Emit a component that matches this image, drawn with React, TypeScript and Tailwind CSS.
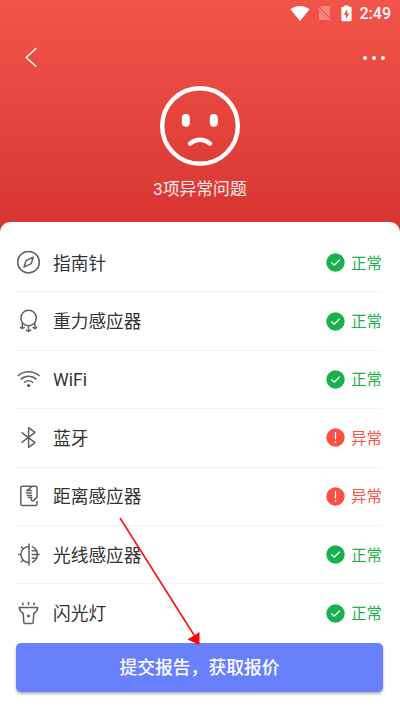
import React from "react";

type Check = {
  id: string;
  name: string;
  ok: boolean;
  icon: React.ReactNode;
};

const CompassIcon = (
  <>
    <circle cx="12.5" cy="12.2" r="10.8" />
    <path d="M17.2 7.2 L15.2 13.7 L8 17.2 L10 10.7 Z" />
  </>
);

const GravityIcon = (
  <>
    <circle cx="12.6" cy="9" r="7.7" />
    <path d="M6.3 14 V19.4 M18.9 14 V19.4 M12.6 16.7 V22.2" />
    <path d="M4 18.2 L6.3 19.6 L8.6 18.2 M16.6 18.2 L18.9 19.6 L21.2 18.2 M10 20.8 L12.6 22.4 L15.2 20.8" />
  </>
);

const WifiIcon = (
  <>
    <path d="M1.6 9 C8 3.2 17.2 3.2 23.6 9" />
    <path d="M4.8 12.4 C9.3 8.3 15.9 8.3 20.4 12.4" />
    <path d="M8 15.7 C10.7 13.1 14.5 13.1 17.2 15.7" />
    <circle cx="12.6" cy="18.5" r="1.6" fill="#555" stroke="none" />
  </>
);

const BluetoothIcon = (
  <path d="M5.6 7.4 L19 17.6 L12.6 22.3 V2.7 L19 7.4 L5.6 17.6" />
);

const DistanceIcon = (
  <>
    <path d="M21 14 V3.6 Q21 2.2 19.6 2.2 H6.2 Q4.8 2.2 4.8 3.6 V20.2 Q4.8 21.6 6.2 21.6 H19.6 Q21 21.6 21 20.2 V17" />
    <path d="M15 3.4 L11 6.6 M15.5 6.6 H10.7 M15.5 9 H10.2 M15.5 11.4 H11.2 M15.5 13.6 H12.4" strokeLinecap="round" />
    <path d="M15.4 13.6 V16 Q16.2 17.6 17.6 16.6 L20.8 13.4" />
  </>
);

const LightIcon = (
  <>
    <path d="M13 1.6 V23.4" />
    <path d="M13 4.4 A8.1 8.1 0 0 0 13 20.6" />
    <path d="M16 4.6 A8.6 8.6 0 0 1 16 20.4" />
    <path d="M15.6 8.7 H21.4 M15.6 12.5 H23.8 M15.6 16.3 H21.4 M2.2 12.5 H5 M5 4.8 L7.4 7.2 M5 20.2 L7.4 17.8" />
  </>
);

const TorchIcon = (
  <>
    <path d="M3.2 6.6 H21.8 C21.3 10.1 20.3 11.2 17.8 12.5 L17.2 21.4 Q17.1 22.4 16.1 22.4 H8.9 Q7.9 22.4 7.8 21.4 L7.2 12.5 C4.7 11.2 3.7 10.1 3.2 6.6 Z" />
    <path d="M6.4 1.6 L7.4 4.3 M12.5 1 V4.1 M18.6 1.6 L17.6 4.3" />
    <circle cx="12.5" cy="15" r="1.4" fill="#555" stroke="none" />
  </>
);

const checks: Check[] = [
  { id: "compass", name: "指南针", ok: true, icon: CompassIcon },
  { id: "gravity", name: "重力感应器", ok: true, icon: GravityIcon },
  { id: "wifi", name: "WiFi", ok: true, icon: WifiIcon },
  { id: "bluetooth", name: "蓝牙", ok: false, icon: BluetoothIcon },
  { id: "distance", name: "距离感应器", ok: false, icon: DistanceIcon },
  { id: "light", name: "光线感应器", ok: true, icon: LightIcon },
  { id: "torch", name: "闪光灯", ok: true, icon: TorchIcon },
];

const StatusBar: React.FC = () => (
  <div className="flex h-[27px] items-center justify-end pr-[9px] text-white">
    <svg className="h-[17px] w-5" viewBox="0 0 20 17">
      <path d="M0.4 4.3 C5.8 -0.2 14.2 -0.2 19.6 4.3 L10 16 Z" fill="#fff" />
    </svg>
    <svg className="ml-[7px] h-[17px] w-[15px]" viewBox="0 0 15 17">
      <path d="M5 1 H13 V15 H2 V4 Z" fill="#fff" opacity="0.3" />
      <path d="M0.5 1.8 L14 15.4" stroke="#ee5148" strokeWidth="2.6" />
      <path d="M0.5 2.4 L13.6 15.6" stroke="#fff" strokeWidth="1.2" opacity="0.4" />
    </svg>
    <svg className="ml-[9px] h-[17px] w-[11px]" viewBox="0 0 11 17">
      <path d="M3.3 0.4 H7.7 V1.8 H9.6 Q10.6 1.8 10.6 2.8 V15.2 Q10.6 16.2 9.6 16.2 H1.4 Q0.4 16.2 0.4 15.2 V2.8 Q0.4 1.8 1.4 1.8 H3.3 Z" fill="#fff" />
      <path d="M6.2 4.3 L2.8 9.8 H5 V14 L8.3 8.4 H6.2 Z" fill="#ee5148" />
    </svg>
    <span className="ml-2 font-['Roboto',sans-serif] text-[16px] leading-4 font-medium">
      2:49
    </span>
  </div>
);

const NavBar: React.FC = () => (
  <div className="flex h-[60px] items-center justify-between pr-[15px] pl-[24px]">
    <svg className="h-5 w-[14px]" viewBox="0 0 14 20" fill="none" stroke="#fff" strokeWidth="1.4">
      <path d="M12.2 1.2 L2.2 10.5 L12.2 19.5" />
    </svg>
    <div className="flex gap-[5px] pt-px">
      <i className="h-1 w-1 rounded-full bg-white" />
      <i className="h-1 w-1 rounded-full bg-white" />
      <i className="h-1 w-1 rounded-full bg-white" />
    </div>
  </div>
);

const SadFace: React.FC = () => (
  <svg className="h-20 w-20" viewBox="0 0 80 80" fill="none" stroke="#fff" strokeLinecap="round">
    <circle cx="40" cy="40" r="37.8" strokeWidth="4.4" />
    <path d="M25.8 32 V36.8 M53.8 32 V36.8" strokeWidth="8" />
    <path d="M30 57.5 Q40 50.2 50 57.5" strokeWidth="4.4" />
  </svg>
);

const StatusIcon: React.FC<{ ok: boolean }> = ({ ok }) => (
  <svg className="h-[19px] w-[19px]" viewBox="0 0 19 19" fill="none" stroke="#fff">
    <circle cx="9.5" cy="9.5" r="9.2" fill={ok ? "#18b14c" : "#fb5044"} stroke="none" />
    {ok ? (
      <path d="M5.3 9.5 L8.2 12.2 L13.8 6.7" strokeWidth="1.3" />
    ) : (
      <path d="M9.5 4 V11.5 M9.5 13.2 V14.7" strokeWidth="1.2" />
    )}
  </svg>
);

const CheckRow: React.FC<{ check: Check }> = ({ check }) => (
  <li className="flex h-[58.4px] items-center border-b border-[#f4f4f4] last:border-transparent">
    <svg
      className="h-[25px] w-[25px]"
      viewBox="0 0 25 25"
      fill="none"
      stroke="#606060"
      strokeWidth="1.5"
      strokeLinejoin="round"
    >
      {check.icon}
    </svg>
    <span className="ml-3 pt-0.5 text-[17.7px] leading-6 text-[#333]">{check.name}</span>
    <div
      className={`mr-px ml-auto flex items-center gap-1.5 text-[15.5px] leading-6 ${
        check.ok ? "text-[#18b14c]" : "text-[#fb5044]"
      }`}
    >
      <StatusIcon ok={check.ok} />
      <span className="pt-0.5">{check.ok ? "正常" : "异常"}</span>
    </div>
  </li>
);

const App: React.FC = () => {
  return (
    <div className="relative h-[710px] w-[400px] overflow-hidden bg-white font-['Roboto','Noto_Sans_CJK_SC',sans-serif]">
      <header className="h-[236px] bg-linear-to-b from-[#f25449] to-[#d73330]">
        <StatusBar />
        <NavBar />
        <div className="-mt-px flex flex-col items-center">
          <SadFace />
          <p className="mt-[11px] text-[16.8px] leading-6 text-white/90">3项异常问题</p>
        </div>
      </header>

      <main className="-mt-[14px] rounded-t-[10px] bg-white px-4 pt-3">
        <ul className="pr-px">
          {checks.map((check) => (
            <CheckRow key={check.id} check={check} />
          ))}
        </ul>
        <button className="block h-[49px] w-[367px] rounded-[5px] bg-[#6880fb] pt-0.5 text-[17.8px] font-medium text-white shadow-[0_2px_3px_rgba(0,0,0,0.3)]">
          提交报告，获取报价
        </button>
      </main>

      {/* pointer to the submit button */}
      <svg
        className="pointer-events-none absolute top-[516px] left-[118px] h-[132px] w-[84px]"
        viewBox="0 0 84 132"
      >
        <path d="M2 2 L76 119" stroke="#fb1212" strokeWidth="1.6" />
        <path d="M81.5 129 L69.5 123.5 L81.5 116 Z" fill="#fb0505" />
      </svg>
    </div>
  );
};

export default App;
